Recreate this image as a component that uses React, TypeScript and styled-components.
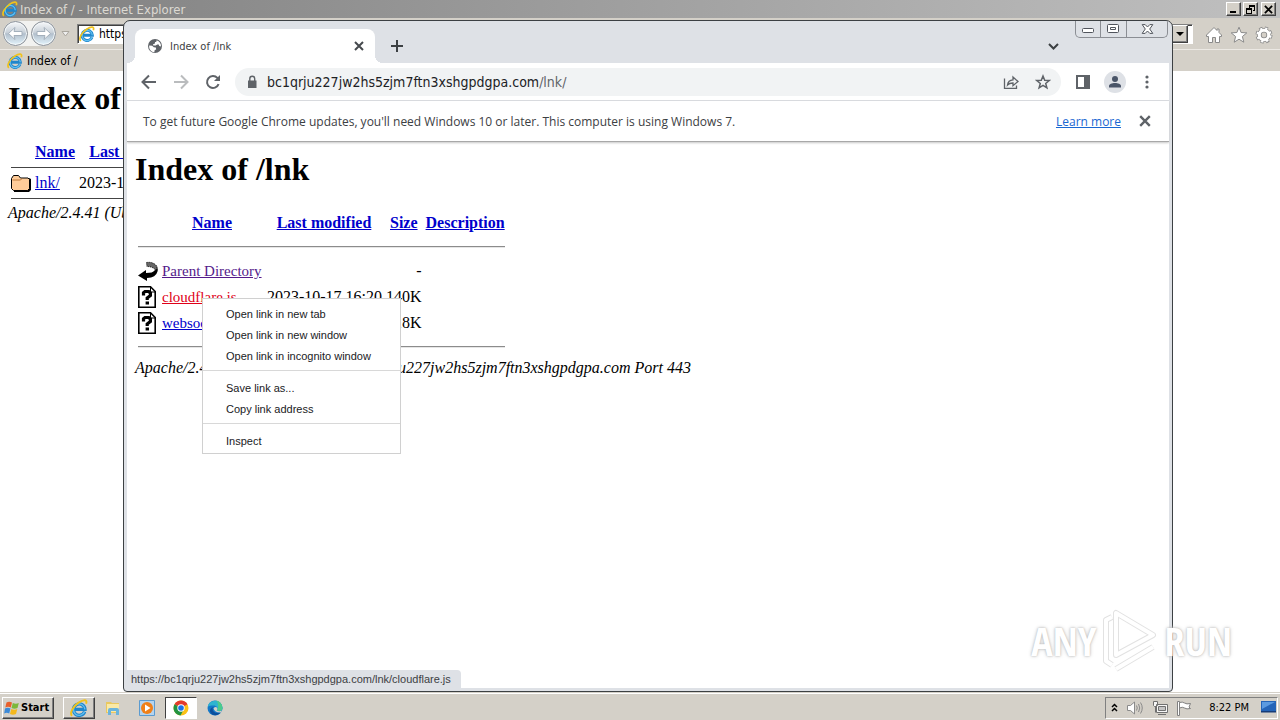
import React from 'react';
import styled, { createGlobalStyle, css } from 'styled-components';

const uiFont = '"DejaVu Sans Condensed", "Noto Sans", sans-serif';
const smallFont = '"Liberation Sans", sans-serif';
const serifFont = '"Liberation Serif", serif';
const face = '#d4d0c8';

const GlobalStyle = createGlobalStyle`
  *, *::before, *::after { box-sizing: border-box; }
  html, body, #root { height: 100%; }
  body { margin: 0; overflow: hidden; font-family: ${uiFont}; font-size: 11px; color: #000; }
  button, input { font: inherit; color: inherit; }
  button { border: 0; margin: 0; padding: 0; background: none; flex-shrink: 0; }
  svg { display: block; flex-shrink: 0; }
`;

const raised = css`
  border: 1px solid;
  border-color: #fff #404040 #404040 #fff;
  box-shadow: inset -1px -1px 0 #808080;
`;

const Desktop = styled.div`
  position: relative;
  display: flex;
  flex-direction: column;
  height: 100%;
  overflow: hidden;
  background: #fff;
`;

/* Internet Explorer */

const IeWindow = styled.section`
  flex: 1;
  min-height: 0;
  overflow: hidden;
  background: #fff;
`;

const IeTitleBar = styled.header`
  display: flex;
  align-items: center;
  gap: 2px;
  height: 18px;
  padding: 0 4px 0 2px;
  background: linear-gradient(90deg, #808080, #c0c0c0);
`;

const IeTitle = styled.span`
  flex: 1;
  font-size: 13px;
  color: #dcd9d2;
`;

const IeCaptionButton = styled.button<{ $gap?: boolean }>`
  ${raised}
  display: grid;
  place-items: center;
  width: 15px;
  height: 14px;
  margin-left: ${({ $gap }) => ($gap ? 1 : 0)}px;
  background: ${face};
`;

const IeToolbar = styled.div`
  display: flex;
  align-items: center;
  height: 31px;
  padding: 0 7px 0 3px;
  background: ${face};
`;

const RoundButtons = styled.div`
  display: flex;
  gap: 3px;
  border-radius: 13px;
  background: #f2f2f0;
`;

const RoundButton = styled.button`
  display: grid;
  place-items: center;
  width: 25px;
  height: 25px;
  border: 1px solid #8a9098;
  border-radius: 50%;
  background: linear-gradient(#f6f8fa, #c9d1d9 45%, #b2bfcc 52%, #e4f4fc);
  box-shadow: inset 0 0 0 1px #f4f8fa;
`;

const HistoryButton = styled.button`
  margin: 0 7px 0 5px;
`;

const IeAddress = styled.div`
  display: flex;
  align-items: center;
  flex: 1;
  height: 20px;
  border: 1px solid;
  border-color: #808080 #fff #fff #808080;
  box-shadow: inset 1px 1px 0 #404040;
  background: #fff;
  padding: 1px 4px 1px 1px;
  gap: 4px;
`;

const IeAddressInput = styled.input`
  flex: 1;
  min-width: 0;
  border: 0;
  padding: 0;
  outline: 0;
  background: none;
  font-size: 12px;
`;

const DropButton = styled.button`
  ${raised}
  display: grid;
  place-items: center;
  width: 16px;
  height: 18px;
  background: ${face};
`;

const IeCommands = styled.div`
  display: flex;
  gap: 7px;
  margin-left: 12px;
  padding-top: 2px;
`;

const IeTabs = styled.nav`
  display: flex;
  align-items: center;
  height: 22px;
  background: ${face};
  border-top: 1px solid #ece9e4;
`;

const IeTab = styled.button`
  display: flex;
  align-items: center;
  gap: 4px;
  padding-left: 7px;
  font-size: 12px;
`;

/* Directory listing */

const Page = styled.main`
  padding: 8px;
  font-family: ${serifFont};
  font-size: 16px;
  line-height: 18px;
`;

const Heading = styled.h1`
  margin: 0 0 21px;
  font-size: 32px;
  line-height: 38px;
  white-space: nowrap;
`;

const Listing = styled.table<{ $compact?: boolean }>`
  border-collapse: separate;
  border-spacing: 2px;
  white-space: nowrap;
  ${({ $compact }) => $compact && css`margin-bottom: 2px;`}

  th, td { height: 24px; padding: 0 1px; }
  td[colspan] { height: ${({ $compact }) => ($compact ? 3 : 20)}px; }
  tr > :nth-child(3), tr > :nth-child(4) { text-align: right; }
  th:nth-child(3), th:nth-child(4) { text-align: center; }
  ${({ $compact }) => !$compact && css`
    td:nth-child(2) { font-size: 15px; }
    th:nth-child(2) { width: 102px; }
    th:nth-child(3) { width: 118px; }
  `}
`;

const Rule = styled.hr<{ $compact?: boolean }>`
  margin: ${({ $compact }) => ($compact ? '1px 0' : '8px 0')};
  border: 0;
  height: ${({ $compact }) => ($compact ? 1 : 2)}px;
  border-top: 1px solid ${({ $compact }) => ($compact ? '#444' : '#8c8c8c')};
  border-bottom: ${({ $compact }) => ($compact ? 0 : 1)}px solid #e6e6e6;
`;

const Link = styled.a<{ $tone?: 'visited' | 'active' }>`
  color: ${({ $tone }) => ($tone === 'visited' ? '#551a8b' : $tone === 'active' ? '#e00018' : '#0000cc')};
  text-decoration: underline;
`;

const Address = styled.address`
  white-space: nowrap;
`;

/* Chrome */

const ChromeWindow = styled.section`
  position: absolute;
  top: 20px;
  right: 107px;
  bottom: 28px;
  left: 123px;
  display: flex;
  flex-direction: column;
  padding: 0 3px 3px;
  border: 1px solid #3c4043;
  border-radius: 7px 7px 4px 4px;
  overflow: hidden;
  background: #dee1e6;
`;

const TabStrip = styled.div`
  display: flex;
  align-items: flex-start;
  height: 42px;
  padding: 0 1px 0 8px;
`;

const Tab = styled.div`
  position: relative;
  display: flex;
  align-items: center;
  width: 240px;
  height: 34px;
  margin-top: 8px;
  padding: 0 11px 0 12px;
  border-radius: 8px 8px 0 0;
  background: #fff;
  color: #3c4043;

  &::before, &::after {
    content: "";
    position: absolute;
    bottom: 0;
    width: 8px;
    height: 8px;
  }
  &::before { left: -8px; background: radial-gradient(circle at 0 0, transparent 8px, #fff 8px); }
  &::after { right: -8px; background: radial-gradient(circle at 100% 0, transparent 8px, #fff 8px); }
`;

const TabTitle = styled.span`
  flex: 1;
  margin-left: 7px;
`;

const NewTab = styled.button`
  margin: 18px auto 0 15px;
`;

const TabSearch = styled.button`
  margin: 18px 15px 0 0;
`;

const CaptionGroup = styled.div`
  display: flex;
  height: 17px;
  border: 1px solid #8b8e94;
  border-top: 0;
  border-radius: 0 0 5px 5px;
`;

const CaptionButton = styled.button<{ $width: number }>`
  display: grid;
  place-items: center;
  width: ${({ $width }) => $width}px;
  & + & { border-left: 1px solid #8b8e94; }
`;

const ChromeToolbar = styled.div`
  display: flex;
  align-items: center;
  height: 38px;
  padding: 0 14px 0 14px;
  border-bottom: 1px solid #dadce0;
  background: #fff;
`;

const NavButtons = styled.div`
  display: flex;
  gap: 16px;
`;

const Omnibox = styled.div`
  display: flex;
  align-items: center;
  flex: 1;
  height: 28px;
  margin: 0 14px;
  padding: 0 10px;
  border-radius: 14px;
  background: #f1f3f4;
`;

const Url = styled.div`
  flex: 1;
  margin-left: 8px;
  font-size: 14px;
  color: #202124;
  white-space: nowrap;
`;

const UrlPath = styled.span`
  color: #5f6368;
`;

const OmniActions = styled.div`
  display: flex;
  gap: 16px;
`;

const ChromeActions = styled.div`
  display: flex;
  align-items: center;
  gap: 13px;
`;

const Avatar = styled.button`
  display: grid;
  place-items: center;
  width: 22px;
  height: 22px;
  border-radius: 50%;
  background: #dee1e6;
`;

const InfoBar = styled.div`
  display: flex;
  align-items: center;
  height: 41px;
  padding: 0 18px 0 16px;
  border-bottom: 1px solid #a8a8a8;
  box-shadow: 0 1px 2px #c8c8c8;
  background: #fff;
  color: #3c4043;
  font-family: "Open Sans", sans-serif;
  font-size: 12px;
  z-index: 1;
`;

const InfoText = styled.span`
  flex: 1;
  white-space: nowrap;
`;

const InfoLink = styled.a`
  margin-right: 18px;
  color: #1967d2;
  text-decoration: underline;
`;

const Viewport = styled.div`
  position: relative;
  flex: 1;
  min-height: 0;
  overflow: hidden;
  background: #fff;
`;

const StatusBubble = styled.div`
  position: absolute;
  bottom: 0;
  left: 0;
  height: 18px;
  padding: 0 10px 0 4px;
  border-radius: 0 4px 0 0;
  background: #dee1e6;
  color: #3c4043;
  font-family: ${smallFont};
  line-height: 18px;
  white-space: nowrap;
`;

const ContextMenu = styled.div`
  position: absolute;
  top: 298px;
  left: 202px;
  display: flex;
  flex-direction: column;
  width: 199px;
  padding: 4px 0 2px;
  border: 1px solid #d0d0d0;
  background: #fff;
  font-family: ${smallFont};
`;

const MenuItem = styled.button`
  height: 21px;
  padding: 0 0 0 23px;
  text-align: left;
  color: #202124;
  white-space: nowrap;
`;

const MenuDivider = styled.hr`
  width: 100%;
  height: 1px;
  margin: 4px 0 6px;
  border: 0;
  background: #d8d8d8;
`;

/* Taskbar */

const Taskbar = styled.footer`
  display: flex;
  align-items: center;
  height: 28px;
  padding: 2px 2px 0;
  border-top: 1px solid ${face};
  box-shadow: inset 0 1px 0 #fff;
  background: ${face};
`;

const StartButton = styled.button`
  ${raised}
  display: flex;
  align-items: center;
  gap: 1px;
  height: 22px;
  width: 52px;
  margin-right: 9px;
  padding-left: 1px;
  background: ${face};
  font-weight: bold;
`;

const TaskButton = styled.button<{ $state?: 'raised' | 'pressed' }>`
  display: grid;
  place-items: center;
  width: 32px;
  height: 22px;
  margin-right: 2px;
  ${({ $state }) => $state === 'raised' && raised}
  ${({ $state }) => $state === 'pressed' && css`
    border: 1px solid;
    border-color: #404040 #fff #fff #404040;
    background: #fff;
  `}
`;

const Tray = styled.div`
  display: flex;
  align-items: center;
  gap: 8px;
  height: 22px;
  margin-left: auto;
  padding: 0 1px 0 5px;
  border: 1px solid;
  border-color: #808080 #fff #fff #808080;
`;

const Clock = styled.time`
  margin: 0 4px 0 8px;
  white-space: nowrap;
`;

/* Watermark */

const Watermark = styled.div`
  position: absolute;
  right: 48px;
  bottom: 47px;
  display: flex;
  align-items: center;
  gap: 6px;
  font-family: "Open Sans Condensed", "Roboto Condensed", "Liberation Sans Narrow", "Liberation Sans", sans-serif;
  font-size: 40px;
  line-height: 60px;
  color: #fff;
  text-shadow: 0 0 2px #b4b4b4, 0 0 4px #d0d0d0;
  pointer-events: none;
`;

const IeLogo = ({ size = 16 }: { size?: number }) => (
  <svg width={size} height={size} viewBox="0 0 16 16" fill="none">
    <path d="M13 11.200A5.100 5.100 0 1 1 13.300 9.200H4.500" stroke="#1f86cc" strokeWidth="3" />
    <path d="M13 11.200A5.100 5.100 0 1 1 13.300 9.200" stroke="#62c0f0" strokeWidth="1.200" />
    <path d="M1.800 14.800C-.6 12.800 2.600 6.400 7.600 3.200s8-2.700 6.700 1" stroke="#f0c21c" strokeWidth="1.700" />
  </svg>
);

const Arrow = ({ flip, color = '#5f6368' }: { flip?: boolean; color?: string }) => (
  <svg width="16" height="16" viewBox="0 0 16 16" fill="none" stroke={color} strokeWidth="2">
    <path d={flip ? 'M1 8h13M8 1.500l6.500 6.500L8 14.500' : 'M15 8H2M8 1.500L1.500 8 8 14.500'} />
  </svg>
);

const RoundArrow = ({ flip }: { flip?: boolean }) => (
  <svg width="17" height="15" viewBox="0 0 17 15">
    <path
      d={flip ? 'M15.500 7.500L9 1.500l1 4H2v4h8l-1 4z' : 'M1.500 7.500L8 1.500l-1 4h8v4H7l1 4z'}
      fill="#fff" stroke="#a4b0bc" strokeWidth="1" strokeLinejoin="round"
    />
  </svg>
);

const Cross = ({ size, color, weight = 2 }: { size: number; color: string; weight?: number }) => (
  <svg width={size} height={size} viewBox="0 0 10 10" stroke={color} strokeWidth={weight}>
    <path d="M1 1l8 8M9 1L1 9" />
  </svg>
);

const Globe = () => (
  <svg width="16" height="16" viewBox="0 0 16 16">
    <circle cx="8" cy="8" r="7" fill="#5f6368" />
    <path d="M2.200 7.500l3 .3 1.600 1.400 2 .4.400 1.600-1.700 1.300-.1 1.700C4.300 14 1.700 11.500 2.200 7.500zM9.500 2.200c.5.900-.3 1.700-1.400 1.900L7.700 5.800 6 6.200l.3 1.300 2.500.1 1.400-1.200 1.500.2.500 1.500 1.800.4c.2-2.800-1.300-5.400-4.500-6.300z" fill="#fff" />
  </svg>
);

const FolderIcon = () => (
  <svg width="20" height="22" viewBox="0 0 20 22">
    <path d="M3 20h15l2-2V7l-2-1v12H3z" fill="#000" />
    <path d="M.5 6.500l2-3h5l2 2.500h7.500l1.500 1.500v9l-2 2H2.500l-2-2z" fill="#fc9" stroke="#000" />
    <path d="M1.500 8h8l1.500-1.500" stroke="#c07838" fill="none" />
  </svg>
);

const BackIcon = () => (
  <svg width="20" height="22" viewBox="0 0 20 22">
    <path d="M18 5q2.500 3 1.500 6.500Q18 17.500 9 18v3L0 15.500 8 10v3q7 0 8.500-2.500L19 8z" fill="#000" />
    <path d="M8.500 2.500q7-1 10.500 4l-1 4q-3-4-9-4z" fill="#666" stroke="#000" strokeWidth="1" strokeDasharray="1 1" />
  </svg>
);

const UnknownIcon = () => (
  <svg width="20" height="22" viewBox="0 0 20 22">
    <path d="M.8.800h11.700l4.700 4.700v15.700H.8z" fill="#fff" stroke="#000" strokeWidth="1.600" />
    <path d="M12.500 1v5h4.500" fill="none" stroke="#000" strokeWidth="1" />
    <path d="M5.500 9.500V6.800L7 5.500h3.800l1.600 1.500v2.500L9.200 12v2" fill="none" stroke="#000" strokeWidth="3.200" />
    <path d="M7.600 15.500h3.400v3H7.600z" />
  </svg>
);

const AnyRunMark = () => (
  <Watermark>
    <span>ANY</span>
    <svg width="56" height="64" viewBox="0 0 56 64" fill="none" strokeLinejoin="round">
      <g stroke="#e2e2e2" strokeWidth="6">
        <path d="M10 8L4 11v41l6 4M14 4v42l37-20zM14 60l37-22" />
      </g>
      <g stroke="#fff" strokeWidth="4">
        <path d="M10 8L4 11v41l6 4M14 4v42l37-20zM14 60l37-22" />
      </g>
    </svg>
    <span>RUN</span>
  </Watermark>
);

const IeBrowser = () => (
  <IeWindow>
    <IeTitleBar>
      <IeLogo />
      <IeTitle>Index of / - Internet Explorer</IeTitle>
      <IeCaptionButton aria-label="Minimize">
        <svg width="9" height="9"><path d="M1 6h6v2H1z" /></svg>
      </IeCaptionButton>
      <IeCaptionButton aria-label="Restore">
        <svg width="9" height="9"><path d="M3 0h6v6H7V5h1V2H4v1H3zM0 3h6v6H0zM1 5v3h4V5z" fillRule="evenodd" /></svg>
      </IeCaptionButton>
      <IeCaptionButton aria-label="Close" $gap><Cross size={9} color="#000" /></IeCaptionButton>
    </IeTitleBar>
    <IeToolbar>
      <RoundButtons>
        <RoundButton aria-label="Back"><RoundArrow /></RoundButton>
        <RoundButton aria-label="Forward"><RoundArrow flip /></RoundButton>
      </RoundButtons>
      <HistoryButton aria-label="History">
        <svg width="9" height="6"><path d="M1 .5h7L4.500 5z" fill="#eee" stroke="#aaa69e" /></svg>
      </HistoryButton>
      <IeAddress>
        <IeLogo />
        <IeAddressInput aria-label="Address" defaultValue="https://bc1qrju227jw2hs5zjm7ftn3xshgpdgpa.com/" />
        <DropButton aria-label="Show addresses">
          <svg width="8" height="4"><path d="M0 0h8L4 4z" /></svg>
        </DropButton>
      </IeAddress>
      <IeCommands>
        <button aria-label="Home">
          <svg width="18" height="18" viewBox="0 0 18 18">
            <path d="M9 1.500L1.500 9v1.500H3.500v6h4v-5h3v5h4v-6h2V9L14 6.500V3h-2v1.500z" fill="#fff" stroke="#8a8a8a" />
          </svg>
        </button>
        <button aria-label="Favorites">
          <svg width="18" height="18" viewBox="0 0 18 18">
            <path d="M9 1.200l2.100 5.300 5.700.4-4.400 3.600 1.400 5.700L9 13.200l-4.800 3 1.400-5.700L1.200 6.900l5.700-.4z" fill="#fff" stroke="#8a8a8a" />
          </svg>
        </button>
        <button aria-label="Tools">
          <svg width="18" height="18" viewBox="0 0 18 18" fill="none">
            <circle cx="9" cy="9" r="6.500" stroke="#8a8a8a" strokeWidth="4" strokeDasharray="2.900 2.205" />
            <circle cx="9" cy="9" r="4.700" stroke="#8a8a8a" strokeWidth="4.600" />
            <circle cx="9" cy="9" r="6.300" stroke="#fff" strokeWidth="2.600" strokeDasharray="2.100 2.848" strokeDashoffset="-.4" />
            <circle cx="9" cy="9" r="4.700" stroke="#fff" strokeWidth="3" />
          </svg>
        </button>
      </IeCommands>
    </IeToolbar>
    <IeTabs>
      <IeTab><IeLogo />Index of /</IeTab>
    </IeTabs>
    <Page>
      <Heading>Index of /</Heading>
      <Listing $compact>
        <thead>
          <tr>
            <th />
            <th><Link href="#name">Name</Link></th>
            <th><Link href="#modified">Last modified</Link></th>
            <th><Link href="#size">Size</Link></th>
            <th><Link href="#description">Description</Link></th>
          </tr>
        </thead>
        <tbody>
          <tr><td colSpan={5}><Rule $compact /></td></tr>
          <tr>
            <td><FolderIcon /></td>
            <td><Link href="#lnk">lnk/</Link></td>
            <td>2023-10-17 16:20</td>
            <td>-</td>
            <td />
          </tr>
          <tr><td colSpan={5}><Rule $compact /></td></tr>
        </tbody>
      </Listing>
      <Address>Apache/2.4.41 (Ubuntu)</Address>
    </Page>
  </IeWindow>
);

const files = [
  { icon: <BackIcon />, name: 'Parent Directory', date: '', size: '-', tone: 'visited' as const },
  { icon: <UnknownIcon />, name: 'cloudflare.js', date: '2023-10-17 16:20', size: '140K', tone: 'active' as const },
  { icon: <UnknownIcon />, name: 'websocket.js', date: '2023-10-17 16:20', size: '18K', tone: undefined },
];

const ChromeBrowser = () => (
  <ChromeWindow>
    <TabStrip>
      <Tab>
        <Globe />
        <TabTitle>Index of /lnk</TabTitle>
        <button aria-label="Close tab"><Cross size={10} color="#45494d" weight={2} /></button>
      </Tab>
      <NewTab aria-label="New tab">
        <svg width="14" height="14" stroke="#3c4043" strokeWidth="2"><path d="M7 1v12M1 7h12" /></svg>
      </NewTab>
      <TabSearch aria-label="Search tabs">
        <svg width="14" height="14" fill="none" stroke="#3c4043" strokeWidth="2"><path d="M3 5l4.500 4.500L12 5" /></svg>
      </TabSearch>
      <CaptionGroup>
        <CaptionButton aria-label="Minimize" $width={24}>
          <svg width="13" height="10"><rect x=".5" y="4.500" width="11" height="4" rx="1" fill="#fff" stroke="#50545c" /></svg>
        </CaptionButton>
        <CaptionButton aria-label="Maximize" $width={26}>
          <svg width="13" height="10" fill="#fff" stroke="#50545c"><rect x=".5" y=".5" width="11" height="8" rx="1" /><path d="M3.500 3.500h5v2h-5z" /></svg>
        </CaptionButton>
        <CaptionButton aria-label="Close" $width={41}>
          <svg width="13" height="10" viewBox="0 0 13 10"><path d="M1.200.600h3l2.300 2.400L8.800.6h3L8.700 5l3.100 4.400h-3L6.500 7 4.200 9.400h-3L4.300 5z" fill="#fff" stroke="#50545c" strokeLinejoin="round" /></svg>
        </CaptionButton>
      </CaptionGroup>
    </TabStrip>
    <ChromeToolbar>
      <NavButtons>
        <button aria-label="Back"><Arrow /></button>
        <button aria-label="Forward"><Arrow flip color="#babcbe" /></button>
        <button aria-label="Reload">
          <svg width="16" height="16" viewBox="0 0 16 16" fill="none" stroke="#5f6368" strokeWidth="2">
            <path d="M13.600 10.200A6 6 0 1 1 12.400 3.900L14 5.500" /><path d="M15 1v6H9z" fill="#5f6368" stroke="none" />
          </svg>
        </button>
      </NavButtons>
      <Omnibox>
        <svg width="14" height="14" viewBox="0 0 14 14">
          <path d="M3 5.500h8.500V13H3z" fill="#5f6368" /><path d="M4.800 6V3.700a2.450 2.450 0 0 1 4.900 0V6" fill="none" stroke="#5f6368" strokeWidth="1.400" />
        </svg>
        <Url>bc1qrju227jw2hs5zjm7ftn3xshgpdgpa.com<UrlPath>/lnk/</UrlPath></Url>
        <OmniActions>
          <button aria-label="Share">
            <svg width="16" height="16" viewBox="0 0 16 16" fill="none" stroke="#5f6368" strokeWidth="1.300">
              <path d="M1.500 4.500v9.800h12V11.500" /><path d="M4.500 11c.4-3.300 2-5 5.500-5.200V3l5 4.500-5 4.200V9c-2.500 0-4.200.5-5.500 2z" />
            </svg>
          </button>
          <button aria-label="Bookmark">
            <svg width="16" height="16" viewBox="0 0 16 16" fill="none" stroke="#5f6368" strokeWidth="1.500">
              <path d="M8 2l1.700 4.200 4.500.3-3.500 2.900 1.200 4.400L8 11.300l-3.900 2.500 1.200-4.400-3.500-2.900 4.500-.3z" />
            </svg>
          </button>
        </OmniActions>
      </Omnibox>
      <ChromeActions>
        <button aria-label="Side panel">
          <svg width="16" height="16"><path d="M1 1h14v14H1zM3 3v10h6V3z" fill="#5f6368" fillRule="evenodd" /></svg>
        </button>
        <Avatar aria-label="Profile">
          <svg width="14" height="14" fill="#4a5568"><circle cx="7" cy="4" r="3" /><path d="M1 12.500V11c0-2 3-3 6-3s6 1 6 3v1.500z" /></svg>
        </Avatar>
        <button aria-label="Menu">
          <svg width="16" height="16" fill="#5f6368"><circle cx="8" cy="3" r="1.600" /><circle cx="8" cy="8" r="1.600" /><circle cx="8" cy="13" r="1.600" /></svg>
        </button>
      </ChromeActions>
    </ChromeToolbar>
    <InfoBar>
      <InfoText>To get future Google Chrome updates, you'll need Windows 10 or later. This computer is using Windows 7.</InfoText>
      <InfoLink href="#learn">Learn more</InfoLink>
      <button aria-label="Dismiss"><Cross size={12} color="#5f6368" weight={2} /></button>
    </InfoBar>
    <Viewport>
      <Page>
        <Heading>Index of /lnk</Heading>
        <Listing>
          <thead>
            <tr>
              <th />
              <th><Link href="#name">Name</Link></th>
              <th><Link href="#modified">Last modified</Link></th>
              <th><Link href="#size">Size</Link></th>
              <th><Link href="#description">Description</Link></th>
            </tr>
          </thead>
          <tbody>
            <tr><td colSpan={5}><Rule /></td></tr>
            {files.map((file) => (
              <tr key={file.name}>
                <td>{file.icon}</td>
                <td><Link href={`#${file.name}`} $tone={file.tone}>{file.name}</Link></td>
                <td>{file.date}</td>
                <td>{file.size}</td>
                <td />
              </tr>
            ))}
            <tr><td colSpan={5}><Rule /></td></tr>
          </tbody>
        </Listing>
        <Address>Apache/2.4.41 (Ubuntu) Server at bc1qrju227jw2hs5zjm7ftn3xshgpdgpa.com Port 443</Address>
      </Page>
      <StatusBubble>https://bc1qrju227jw2hs5zjm7ftn3xshgpdgpa.com/lnk/cloudflare.js</StatusBubble>
    </Viewport>
  </ChromeWindow>
);

const LinkMenu = () => (
  <ContextMenu>
    <MenuItem>Open link in new tab</MenuItem>
    <MenuItem>Open link in new window</MenuItem>
    <MenuItem>Open link in incognito window</MenuItem>
    <MenuDivider />
    <MenuItem>Save link as...</MenuItem>
    <MenuItem>Copy link address</MenuItem>
    <MenuDivider />
    <MenuItem>Inspect</MenuItem>
  </ContextMenu>
);

const WindowsTaskbar = () => (
  <Taskbar>
    <StartButton>
      <svg width="16" height="16" viewBox="0 0 16 16">
        <path d="M2.500 2.500q2.500-1.500 5.500 0L6.800 7.500q-2.800-1.500-5.500 0z" fill="#e8602c" />
        <path d="M8.800 3q3 1.500 6 0L13.500 8q-3 1.500-6 0z" fill="#7cb83a" />
        <path d="M1 8.500q2.800-1.500 5.500 0L5.200 13.500q-2.500-1.500-5 0z" fill="#3c8ad8" />
        <path d="M7.300 9q3 1.500 6 0L12 14q-3 1.500-6 0z" fill="#f4b81c" />
      </svg>
      Start
    </StartButton>
    <TaskButton $state="raised" aria-label="Internet Explorer"><IeLogo size={18} /></TaskButton>
    <TaskButton aria-label="Explorer">
      <svg width="16" height="16" viewBox="0 0 16 16">
        <path d="M1 2h5l1 1h7v10H1z" fill="#e9c860" /><path d="M2 4h12v8H2z" fill="#fae9a6" />
        <path d="M3 15V10q0-2 2-2h7q2 0 2 2v5h-3v-4H6v4z" fill="#6bb4dc" />
      </svg>
    </TaskButton>
    <TaskButton aria-label="Media Player">
      <svg width="16" height="16" viewBox="0 0 16 16">
        <path d="M.5.500h15v15H.5z" fill="#b5d4ee" stroke="#5b9bd0" /><circle cx="8" cy="8" r="6" fill="#f08018" /><path d="M6 4.500l5.500 3.500L6 11.500z" fill="#fff" />
      </svg>
    </TaskButton>
    <TaskButton $state="pressed" aria-label="Chrome">
      <svg width="16" height="16" viewBox="0 0 16 16">
        <circle cx="8" cy="8" r="7.500" fill="#fbc116" />
        <path d="M8 8L1.500 4.250A7.500 7.500 0 0 1 14.500 4.250z" fill="#e33b2e" />
        <path d="M8 8L1.500 4.250A7.500 7.500 0 0 0 7.500 15.500l3.300-5.900z" fill="#229342" />
        <circle cx="8" cy="8" r="3.700" fill="#fff" /><circle cx="8" cy="8" r="2.800" fill="#1a73e8" />
      </svg>
    </TaskButton>
    <TaskButton aria-label="Edge">
      <svg width="16" height="16" viewBox="0 0 16 16">
        <circle cx="8" cy="8" r="7.500" fill="#1478c8" />
        <path d="M.6 7A7.500 7.500 0 0 1 15.500 8c0 3-3.500 3.500-5.500 2.300C11.500 8 9.500 5.500 6.500 5.600 4 5.700 1.500 6 .6 7z" fill="#2fb4d0" />
        <path d="M9 .6A7.500 7.500 0 0 1 15.500 8c0 3-3.500 3.500-5.500 2.300C11.500 8 12 3 9 .6z" fill="#4ccb8c" />
        <path d="M5.500 8.500c0 4 4 5.500 8 3.800C11 16.500 5 16 3.200 12 2.500 10 3.500 8 6.500 7z" fill="#0c4f9c" />
        <path d="M6.500 8.500q1-2.500 3.500-1 1 1.500-.3 3 2.500 1.500 5.400 0l-1 2Q8 13 6.500 8.500z" fill="#d4d0c8" />
      </svg>
    </TaskButton>
    <Tray>
      <svg width="7" height="10" fill="none" stroke="#000" strokeWidth="1.500"><path d="M1 4l2.500-2.500L6 4M1 8l2.500-2.500L6 8" /></svg>
      <svg width="18" height="16" viewBox="0 0 18 16" fill="#fff" stroke="#8a8a8a">
        <path d="M1.500 5.500h3L8.500 2v12l-4-3.500h-3z" /><path d="M10.500 5.500q1.500 2.500 0 5M12.500 4q2.500 4 0 8M14.500 2.500q3.500 5.500 0 11" fill="none" />
      </svg>
      <svg width="16" height="16" viewBox="0 0 16 16" fill="#f6f6f6" stroke="#707070">
        <path d="M4.500 4.500h11v8h-11zM6 14.500h8M1.500 1.500h4v4l-1 1h-2l-1-1zM3.500 7v5.500" /><path d="M6.500 6.500h7v4h-7z" fill="#c4c4c4" />
      </svg>
      <svg width="17" height="16" viewBox="0 0 17 16" fill="#fff" stroke="#808080">
        <path d="M1.500 1.500h2v14h-2z" /><path d="M3.500 2.500q3-1 5 .5t6 .5l-1.500 3.500 1.500 1.500q-4 1-6-.5t-5 0z" />
      </svg>
      <Clock>8:22 PM</Clock>
      <svg width="15" height="13" viewBox="0 0 15 13"><path d="M0 0h15v10H0z" fill="#2464b8" /><path d="M1 1h13L1 8z" fill="#5b9ae0" /><path d="M0 10h15v1.500H0z" fill="#163c78" /></svg>
    </Tray>
  </Taskbar>
);

export default function App() {
  return (
    <Desktop>
      <GlobalStyle />
      <IeBrowser />
      <WindowsTaskbar />
      <ChromeBrowser />
      <LinkMenu />
      <AnyRunMark />
    </Desktop>
  );
}
